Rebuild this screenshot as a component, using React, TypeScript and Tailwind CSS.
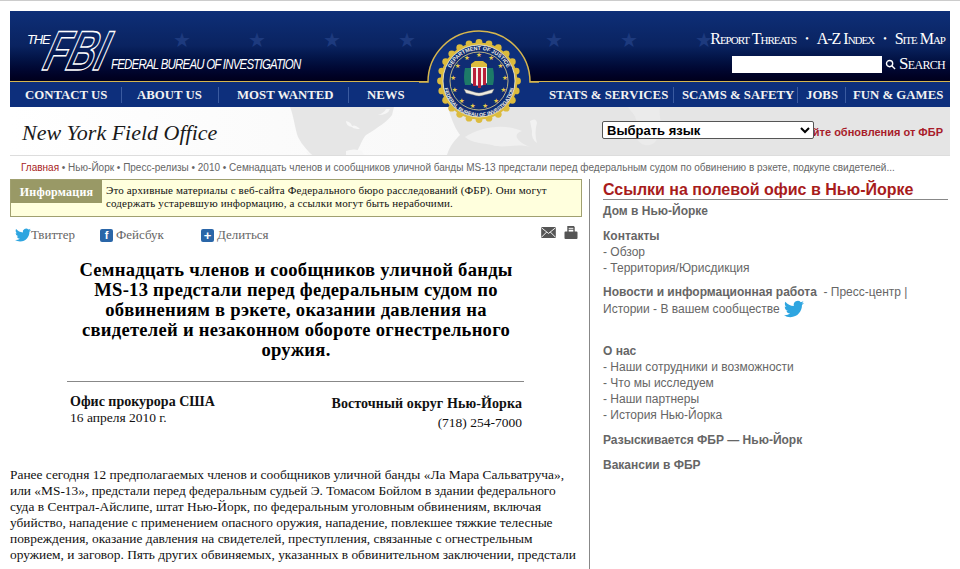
const leftNav = [
  { label: 'CONTACT US', cls: 'pl-[15px] w-[112px]' },
  { label: 'ABOUT US', cls: 'pl-[15px] w-[97px]' },
  { label: 'MOST WANTED', cls: 'pl-[18px] w-[130px]' },
  { label: 'NEWS', cls: 'pl-[18px]', last: true },
];

const rightNav = [
  { label: 'STATS & SERVICES', cls: 'w-[125px]' },
  { label: 'SCAMS & SAFETY', cls: 'pl-[8px] w-[124px]' },
  { label: 'JOBS', cls: 'pl-[8px] w-[48px]' },
  { label: 'FUN & GAMES', cls: 'pl-[7px] w-[104px]', last: true },
];

const starsX = [183, 258, 333, 408, 555, 630, 705];

function TwitterBird({ className }: { className: string }) {
  return (
    <svg viewBox="0 0 24 24" className={className} fill="#2ea5e0">
      <path d="M23.95 4.57a10 10 0 0 1-2.82.77 4.96 4.96 0 0 0 2.16-2.72c-.95.55-2 .96-3.12 1.19a4.92 4.92 0 0 0-8.38 4.48C7.69 8.1 4.07 6.13 1.64 3.16a4.82 4.82 0 0 0-.66 2.48c0 1.71.87 3.21 2.19 4.1a4.9 4.9 0 0 1-2.23-.62v.06a4.92 4.92 0 0 0 3.95 4.83 5 5 0 0 1-2.21.09 4.94 4.94 0 0 0 4.6 3.42A9.87 9.87 0 0 1 0 19.54a14 14 0 0 0 7.56 2.21c9.05 0 14-7.5 14-13.98 0-.21 0-.42-.02-.63a9.94 9.94 0 0 0 2.46-2.55z" />
    </svg>
  );
}

function Seal() {
  const stars = Array.from({ length: 13 }, (_, i) => {
    const a = (i / 13) * Math.PI * 2 - Math.PI / 2;
    return { x: 60 + Math.cos(a) * 26, y: 55 + Math.sin(a) * 26 };
  });
  const scallops = Array.from({ length: 24 }, (_, i) => {
    const a = (i / 24) * Math.PI * 2;
    return { x: 60 + Math.cos(a) * 38.5, y: 55 + Math.sin(a) * 38.5 };
  });
  return (
    <svg viewBox="0 0 120 110" className="absolute left-[419px] top-[25px] h-[110px] w-[120px]">
      <path d="M0 56 H9 A51 51 0 0 1 111 56 H120 V81 H0 Z" fill="#0d2f7c" />
      <path d="M0 56 H9 A51 51 0 0 1 111 56 H120" fill="none" stroke="#d6b64e" strokeWidth="1.5" />
      {scallops.map((s, i) => (
        <circle key={i} cx={s.x} cy={s.y} r="3.4" fill="#dcbb3e" />
      ))}
      <circle cx="60" cy="55" r="38.5" fill="#dcbb3e" />
      <circle cx="60" cy="55" r="36" fill="#0f2c74" stroke="#f3f0e2" strokeWidth="0.8" />
      <circle cx="60" cy="55" r="29" fill="#0f2c74" stroke="#e6d68a" strokeWidth="0.8" />
      <defs>
        <path id="sealTop" d="M29 55 A31 31 0 0 1 91 55" />
        <path id="sealBottom" d="M24.5 55 A35.5 35.5 0 0 0 95.5 55" />
      </defs>
      <text fontFamily="Liberation Sans, sans-serif" fontWeight="700" fontSize="5.4" fill="#f4f1e6">
        <textPath href="#sealTop" startOffset="50%" textAnchor="middle">
          DEPARTMENT OF JUSTICE
        </textPath>
      </text>
      <text fontFamily="Liberation Sans, sans-serif" fontWeight="700" fontSize="5.1" fill="#f4f1e6">
        <textPath href="#sealBottom" startOffset="50%" textAnchor="middle">
          FEDERAL BUREAU OF INVESTIGATION
        </textPath>
      </text>
      {stars.map((s, i) => (
        <text key={i} x={s.x} y={s.y + 2.2} fontSize="6.5" fill="#e5c84a" textAnchor="middle" fontFamily="DejaVu Sans, sans-serif">
          ★
        </text>
      ))}
      <path d="M46 42 h6 v17 h-6 q-2 -8 0 -17z" fill="#1d7a68" />
      <path d="M68 42 h6 q2 9 0 17 h-6z" fill="#1d7a68" />
      <path d="M52 40 h16 v17 q-8 6 -16 0z" fill="#f5f2ea" />
      <path d="M54 42 h3 v18 h-3z M59 42 h3 v20 h-3z M64 42 h3 v17 h-3z" fill="#b8203a" />
      <path d="M52 38 L56 35 H64 L68 38 V41 H52z" fill="#dcbb3e" />
      <path d="M45 63 l10 3 q5 2 10 0 l10 -3 -2 4 -8 2 q-5 2 -10 0 l-8 -2z" fill="#eeeadf" stroke="#89857a" strokeWidth="0.4" />
    </svg>
  );
}

function MapShapes() {
  return (
    <svg viewBox="0 0 940 48" className="absolute left-0 top-0 h-[48px] w-[940px]">
      <path d="M280 0 C284 10 285 22 288 30 C292 38 298 44 302 48 H345 C350 40 352 32 356 28 C366 22 378 14 382 8 L384 0 Z" fill="#e6e6e6" />
      <path d="M336 14 q5 1 6 5 q3 -2 8 3 q-6 0 -8 -2 q-6 -1 -6 -6z M368 8 q6 -2 8 -6 h4 q-2 6 -12 6z" fill="#f6f6f6" />
      <path d="M296 44 l6 4 h-4z M336 44 q8 -3 16 0 l2 4 h-18z" fill="#f7f7f7" />
      <path d="M437 48 C440 38 446 32 450 28 C444 20 440 8 438 0 H940 V48 Z" fill="#e5e5e5" />
      <path d="M455 30 C470 20 494 16 512 24 C500 28 510 36 520 40 C506 36 494 42 482 38 C472 36 462 36 455 30z" fill="#f0f0f0" />
      <path d="M520 14 q6 -4 7 2 q-3 10 0 20 q-6 -4 -5 -12z" fill="#f2f2f2" />
      <path d="M618 0 H650 C648 12 656 24 644 36 C632 44 622 30 626 18 C628 10 622 6 618 0z" fill="#ebebeb" />
    </svg>
  );
}

export default function App() {
  return (
    <div className="relative h-[569px] w-[960px] overflow-hidden border-t border-[#cccccc] bg-white font-['Liberation_Sans',Arial,sans-serif]">
      <div className="relative mx-[10px] mt-[10px]">
        {/* blue banner */}
        <div className="relative flex h-[70px] justify-between bg-gradient-to-b from-[#0e2f78] via-[#0a2360] to-[#00001c]">
          {starsX.map(x => (
            <span
              key={x}
              className="absolute top-[19px] font-['DejaVu_Sans',sans-serif] text-[20px] leading-[20px] text-[#1d3a7e]"
              style={{ left: x - 20 }}
            >
              ★
            </span>
          ))}
          <div className="relative flex items-start pl-[17px] pt-[22px] text-white">
            <span className="w-[14px] whitespace-nowrap text-[13px] italic leading-[14px] tracking-[-1.2px]">THE</span>
            <span className="-mt-[2px] inline-block h-[40px] w-[70px] origin-bottom-left -skew-x-[24deg] scale-x-[0.68] text-[56px] font-bold italic leading-[40px] tracking-[0px] text-transparent [-webkit-text-stroke:1.5px_white]">
              FBI
            </span>
            <span className="mt-[23px] inline-block origin-left scale-x-[0.74] whitespace-nowrap text-[15.5px] italic leading-[16px] tracking-[-1.05px]">
              FEDERAL BUREAU OF INVESTIGATION
            </span>
          </div>
          <div className="relative flex flex-col items-end pr-[5px] pt-[19px] font-['Liberation_Serif',serif] text-white">
            <div className="flex h-[18px] items-center text-[16px] leading-[18px] tracking-[-1px] [font-variant-caps:small-caps]">
              <span>Report Threats</span>
              <span className="mx-[9px] text-[10px]">•</span>
              <span>A-Z Index</span>
              <span className="mx-[9px] text-[10px]">•</span>
              <span>Site Map</span>
            </div>
            <div className="mt-[7px] flex h-[18px] items-center">
              <input className="h-[17px] w-[150px] bg-white" aria-label="Search" />
              <svg viewBox="0 0 12 12" className="ml-[3px] h-[11px] w-[11px]" fill="none" stroke="#ffffff" strokeWidth="1.5">
                <circle cx="5" cy="5" r="3.4" />
                <path d="M7.6 7.6 L11 11" />
              </svg>
              <span className="ml-[3px] text-[17px] leading-[18px] tracking-[-0.7px] [font-variant-caps:small-caps]">Search</span>
            </div>
          </div>
        </div>

        {/* nav bar */}
        <div className="flex h-[26px] items-center justify-between border-t-[1.5px] border-[#d6b64e] bg-[#0d2f7c] font-['Liberation_Serif',serif] text-[12.8px] font-bold leading-[16px] text-[#f2f2f2]">
          <div className="flex">
            {leftNav.map(item => (
              <div
                key={item.label}
                className={`whitespace-nowrap ${item.cls} ${item.last ? '' : 'border-r border-[#3a5aa0]'}`}
              >
                {item.label}
              </div>
            ))}
          </div>
          <div className="flex">
            {rightNav.map(item => (
              <div
                key={item.label}
                className={`whitespace-nowrap ${item.cls} ${item.last ? '' : 'border-r border-[#3a5aa0]'}`}
              >
                {item.label}
              </div>
            ))}
          </div>
        </div>

        {/* field office strip */}
        <div className="relative flex h-[49px] items-center justify-between overflow-hidden border-b border-[#dddddd] bg-gradient-to-r from-white via-[#f8f8f8] to-[#f0f0f0]">
          <MapShapes />
          <span className="relative pl-[12px] pt-[2px] font-['Liberation_Serif',serif] text-[22px] italic text-[#1a1a1a]">
            New York Field Office
          </span>
          <span className="relative pr-[7px] pt-[2px] text-[11px] font-bold text-[#a81c2a]">Получайте обновления от ФБР</span>
        </div>
      </div>

      <select className="absolute left-[602px] top-[120px] h-[18px] w-[212px] rounded-[2px] border border-[#555555] bg-white text-[13px] font-bold leading-[16px] text-black">
        <option>Выбрать язык</option>
      </select>

      <Seal />

      {/* breadcrumbs */}
      <div className="h-[23px] whitespace-nowrap pl-[21px] pt-[5px] text-[10px] leading-[14px] text-[#666666]">
        <span className="text-[#a81c1c]">Главная</span> • Нью-Йорк • Пресс-релизы • 2010 • Семнадцать членов и сообщников уличной банды MS-13 предстали перед федеральным судом по обвинению в рэкете, подкупе свидетелей...
      </div>

      <div className="flex">
        {/* article */}
        <div className="ml-[10px] h-[420px] w-[580px] border-r border-[#888888] pr-[7px] font-['Liberation_Serif',serif] text-[#111111]">
          <div className="flex h-[38px] w-[572px] items-start border border-[#a0a070] bg-[#ffffdd]">
            <div className="flex h-[23px] w-[91px] shrink-0 items-center justify-center bg-[#999966] text-[12px] font-bold tracking-[0.2px] text-white">
              Информация
            </div>
            <p className="pl-[4px] pt-[4px] text-[11px] leading-[13px] tracking-[0.15px]">
              Это архивные материалы с веб-сайта Федерального бюро расследований (ФБР). Они могут
              <br />
              содержать устаревшую информацию, а ссылки могут быть нерабочими.
            </p>
          </div>

          <div className="mt-[8px] flex h-[20px] items-center text-[13px] text-[#666666]">
            <TwitterBird className="ml-[5px] h-[16px] w-[16px]" />
            <span className="w-[69px]">Твиттер</span>
            <span className="flex h-[13px] w-[13px] items-center justify-center rounded-[2px] bg-[#2a66a8] font-['Liberation_Sans',sans-serif] text-[11px] font-bold leading-[13px] text-white">
              f
            </span>
            <span className="ml-[3px] w-[85px]">Фейсбук</span>
            <span className="flex h-[13px] w-[13px] items-center justify-center rounded-[2px] bg-[#2a66a8] font-['Liberation_Sans',sans-serif] text-[13px] font-bold leading-[13px] text-white">
              +
            </span>
            <span className="ml-[3px]">Делиться</span>
            <div className="ml-auto mr-[4px] flex -translate-y-[3px] items-center gap-[8px]">
              <svg viewBox="0 0 16 12" className="h-[11px] w-[15px]">
                <rect width="16" height="12" rx="1" fill="#555555" />
                <path d="M0.5 1 L8 7 L15.5 1 M0.5 11 L6 5.5 M15.5 11 L10 5.5" fill="none" stroke="#ffffff" strokeWidth="1" />
              </svg>
              <svg viewBox="0 0 14 14" className="h-[13px] w-[14px]" fill="#555555">
                <path d="M3 0 H10 L11 1 V6 H13 Q14 6 14 7 V13 Q14 14 13 14 H1 Q0 14 0 13 V7 Q0 6 1 6 H3z" />
                <rect x="4.5" y="2" width="5" height="1" fill="#ffffff" />
                <rect x="4.5" y="4" width="5" height="2" fill="#ffffff" />
              </svg>
            </div>
          </div>

          <h1 className="ml-[20px] mt-[15px] w-[532px] text-center text-[18.6px] font-bold leading-[20px] tracking-[0.25px] text-black">
            Семнадцать членов и сообщников уличной банды
            <br />
            MS-13 предстали перед федеральным судом по
            <br />
            обвинениям в рэкете, оказании давления на
            <br />
            свидетелей и незаконном обороте огнестрельного
            <br />
            оружия.
          </h1>

          <div className="ml-[57px] mt-[21px] flex w-[457px] justify-between border-t border-[#888888] pl-[3px] pr-[2px] pt-[12px] text-[13.5px]">
            <div className="leading-[16px]">
              <div className="text-[14px] font-bold">Офис прокурора США</div>
              <div>16 апреля 2010 г.</div>
            </div>
            <div className="text-right leading-[19px]">
              <div className="text-[14px] font-bold tracking-[0.1px]">Восточный округ Нью-Йорка</div>
              <div>(718) 254-7000</div>
            </div>
          </div>

          <p className="mt-[35px] whitespace-nowrap text-[13.4px] leading-[16px]">
            Ранее сегодня 12 предполагаемых членов и сообщников уличной банды «Ла Мара Сальватруча»,
            <br />
            или «MS-13», предстали перед федеральным судьей Э. Томасом Бойлом в здании федерального
            <br />
            суда в Сентрал-Айслипе, штат Нью-Йорк, по федеральным уголовным обвинениям, включая
            <br />
            убийство, нападение с применением опасного оружия, нападение, повлекшее тяжкие телесные
            <br />
            повреждения, оказание давления на свидетелей, преступления, связанные с огнестрельным
            <br />
            оружием, и заговор. Пять других обвиняемых, указанных в обвинительном заключении, предстали
          </p>
        </div>

        {/* sidebar */}
        <div className="ml-[13px] w-[345px] text-[12px] leading-[16px] text-[#666666]">
          <h2 className="mt-[2px] border-b border-[#888888] text-[16px] font-bold leading-[18px] text-[#a81c1c]">
            Ссылки на полевой офис в Нью-Йорке
          </h2>
          <div className="mt-[3px] font-bold">Дом в Нью-Йорке</div>
          <div className="mt-[9px] font-bold">Контакты</div>
          <div>- Обзор</div>
          <div>- Территория/Юрисдикция</div>
          <div className="mt-[8px]">
            <span className="font-bold">Новости и информационная работа</span>&nbsp; - Пресс-центр |
          </div>
          <div className="-mt-[1px] flex items-center">
            Истории - В вашем сообществе
            <TwitterBird className="ml-[4px] h-[20px] w-[20px]" />
          </div>
          <div className="mt-[24px] font-bold">О нас</div>
          <div>- Наши сотрудники и возможности</div>
          <div>- Что мы исследуем</div>
          <div>- Наши партнеры</div>
          <div>- История Нью-Йорка</div>
          <div className="mt-[9px] font-bold">Разыскивается ФБР — Нью-Йорк</div>
          <div className="mt-[9px] font-bold">Вакансии в ФБР</div>
        </div>
      </div>
    </div>
  );
}
